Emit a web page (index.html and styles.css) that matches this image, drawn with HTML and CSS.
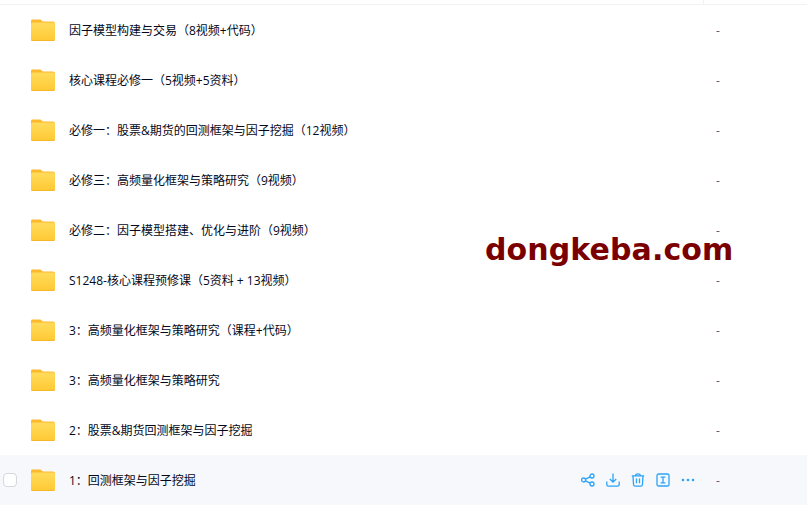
FILE: index.html
```html
<!DOCTYPE html>
<html lang="zh-CN">
<head>
<meta charset="utf-8">
<title>文件列表</title>
<link rel="stylesheet" href="styles.css">
</head>
<body>
<svg class="defs" width="0" height="0" aria-hidden="true">
  <defs>
    <linearGradient id="fg" x1="0" y1="0" x2="0" y2="1">
      <stop offset="0" stop-color="#ffdb5c"/>
      <stop offset="1" stop-color="#ffc933"/>
    </linearGradient>
    <symbol id="folder" viewBox="0 0 24 22">
      <path d="M1.5 0.5H8.5C9.6 0.5 10.2 1 10.9 1.7L11.8 2.6H21.8C23 2.6 24 3.5 24 4.7V8H0V2C0 1.1.6.5 1.5.5Z" fill="#fdb92c"/>
      <rect x="0" y="3.6" width="24" height="18.4" rx="1.8" fill="url(#fg)"/>
      <path d="M0 20.2C0 21.2.8 22 1.8 22H22.2C23.2 22 24 21.2 24 20.2V20.6C24 21 23 21.2 22.2 21.2H1.8C1 21.2 0 21 0 20.6Z" fill="#f5b128"/>
    </symbol>
  </defs>
</svg>
<div class="header"><span class="header-cell-main"></span><span class="header-cell-end"></span></div>
<ul class="list">
  <li class="row"><span class="check"></span><svg class="folder"><use href="#folder"/></svg><span class="name">因子模型构建与交易（8视频+代码）</span><span class="size">-</span></li>
  <li class="row"><span class="check"></span><svg class="folder"><use href="#folder"/></svg><span class="name">核心课程必修一（5视频+5资料）</span><span class="size">-</span></li>
  <li class="row"><span class="check"></span><svg class="folder"><use href="#folder"/></svg><span class="name">必修一：股票&amp;期货的回测框架与因子挖掘（12视频）</span><span class="size">-</span></li>
  <li class="row"><span class="check"></span><svg class="folder"><use href="#folder"/></svg><span class="name">必修三：高频量化框架与策略研究（9视频）</span><span class="size">-</span></li>
  <li class="row"><span class="check"></span><svg class="folder"><use href="#folder"/></svg><span class="name">必修二：因子模型搭建、优化与进阶（9视频）</span><span class="size">-</span></li>
  <li class="row"><span class="check"></span><svg class="folder"><use href="#folder"/></svg><span class="name">S1248-核心课程预修课（5资料 + 13视频）</span><span class="size">-</span></li>
  <li class="row"><span class="check"></span><svg class="folder"><use href="#folder"/></svg><span class="name">3：高频量化框架与策略研究（课程+代码）</span><span class="size">-</span></li>
  <li class="row"><span class="check"></span><svg class="folder"><use href="#folder"/></svg><span class="name">3：高频量化框架与策略研究</span><span class="size">-</span></li>
  <li class="row"><span class="check"></span><svg class="folder"><use href="#folder"/></svg><span class="name">2：股票&amp;期货回测框架与因子挖掘</span><span class="size">-</span></li>
  <li class="row row-hover"><span class="check check-on"></span><svg class="folder"><use href="#folder"/></svg><span class="name">1：回测框架与因子挖掘</span>
    <span class="actions">
      <svg class="act" viewBox="0 0 14 14"><circle cx="2.6" cy="7" r="2"/><circle cx="11" cy="3" r="2"/><circle cx="11" cy="11" r="2"/><path d="M4.5 6.1 9.1 3.9M4.5 7.9 9.1 10.1"/></svg>
      <svg class="act" viewBox="0 0 14 14"><path d="M7 .6V9.2M3.8 6 7 9.2 10.2 6M.8 8.6v3c0 .9.6 1.6 1.5 1.6h9.4c.9 0 1.5-.7 1.5-1.6v-3"/></svg>
      <svg class="act" viewBox="0 0 14 14"><path d="M.8 2.8h12.4M4.6 2.8C4.6 1.4 5.5.8 7 .8s2.4.6 2.4 2M2 2.8l.5 8.6c.1 1.1.8 1.8 1.9 1.8h5.2c1.1 0 1.8-.7 1.9-1.8L12 2.8M5.5 5.6v4.6M8.5 5.6v4.6"/></svg>
      <svg class="act" viewBox="0 0 14 14"><rect x="1" y="1" width="12" height="12" rx="1.6"/><path d="M4.6 4.2h4.8M4.6 9.8h4.8M7 4.2v5.6"/></svg>
      <svg class="act act-more" viewBox="0 0 14 14"><circle cx="2" cy="7" r="1.3"/><circle cx="7" cy="7" r="1.3"/><circle cx="12" cy="7" r="1.3"/></svg>
    </span>
    <span class="size">-</span></li>
</ul>
<div class="watermark">dongkeba.com</div>
</body>
</html>
```
FILE: styles.css
```css
* { box-sizing: border-box; }
html, body { margin: 0; padding: 0; }
body {
  width: 807px;
  height: 522px;
  overflow: hidden;
  background: #fff;
  position: relative;
  font-family: "Open Sans", "Noto Sans CJK SC", sans-serif;
  font-size: 12px;
  color: #03081a;
  text-spacing-trim: space-all;
}
.defs { position: absolute; }
.header {
  height: 5px;
  display: flex;
  border-bottom: 1px solid #f1f2f4;
}
.header-cell-main { width: 704px; border-right: 1px solid #f1f2f4; }
.header-cell-end { flex: 1; }
.list { list-style: none; margin: 0; padding: 0; }
.row {
  height: 50px;
  display: flex;
  align-items: center;
  padding-left: 3px;
}
.row-hover { background: #f7f8fc; }
.check {
  width: 14px;
  height: 14px;
  margin-right: 14px;
  flex: none;
  visibility: hidden;
}
.check-on {
  visibility: visible;
  background: #fff;
  border: 1px solid #d4d7de;
  border-radius: 4px;
}
.folder { width: 24px; height: 22px; flex: none; margin-right: 14px; }
.name { flex: 1; white-space: nowrap; line-height: 18px; padding-top: 2px; }
.actions {
  display: flex;
  align-items: center;
  gap: 11px;
  margin-right: 21px;
}
.act {
  width: 14px;
  height: 14px;
  fill: none;
  stroke: #2ba4f7;
  stroke-width: 1.3;
}
.act-more { fill: #2ba4f7; stroke: none; }
.size { width: 91px; flex: none; color: #5a5f6b; line-height: 18px; padding-top: 2px; }
.watermark {
  position: absolute;
  left: 485px;
  top: 228px;
  font-family: "DejaVu Sans", sans-serif;
  font-weight: 700;
  font-size: 30px;
  letter-spacing: 0.1px;
  line-height: 44px;
  color: #7a0000;
  white-space: nowrap;
}
```
